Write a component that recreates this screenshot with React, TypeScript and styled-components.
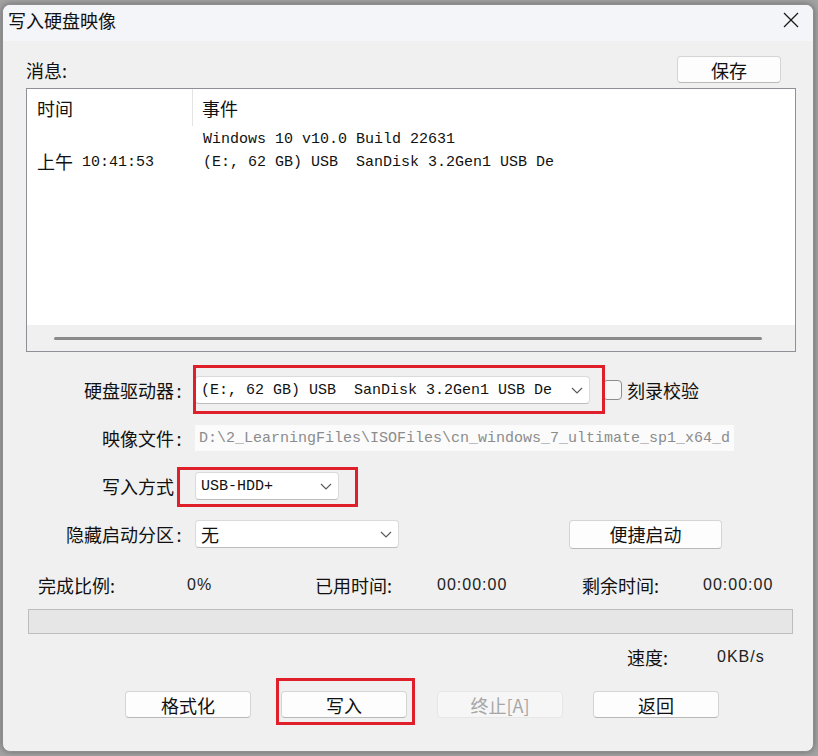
import React from "react";
import styled, { createGlobalStyle } from "styled-components";

const GlobalStyle = createGlobalStyle`
  html, body {
    margin: 0;
    padding: 0;
    background: #a3a3a3;
  }
  body {
    font-family: "Noto Sans CJK SC", "Noto Sans", sans-serif;
    color: #111;
  }
  * {
    box-sizing: border-box;
  }
`;

const Screen = styled.div`
  width: 818px;
  height: 756px;
  padding: 4px 4px 4px 2px;
`;

const Dialog = styled.div`
  width: 812px;
  height: 748px;
  background: #f0f0f0;
  border: 1px solid #8e8e8e;
  border-radius: 8px;
  overflow: hidden;
  display: flex;
  flex-direction: column;
  box-shadow: 0 0 6px rgba(0, 0, 0, 0.35);
`;

const TitleBar = styled.div`
  flex: none;
  height: 36px;
  background: #f4f5f9;
  display: flex;
  align-items: center;
  justify-content: space-between;
  padding: 0 14px 6px 5px;
  font-size: 18px;
`;

const Content = styled.div`
  flex: 1;
  display: flex;
  flex-direction: column;
  padding: 15px 17px 0 23px;
`;

const TopRow = styled.div`
  height: 27px;
  display: flex;
  align-items: center;
  justify-content: space-between;
  font-size: 18px;
`;

const Button = styled.button<{ $w: number; $h?: number }>`
  width: ${(p) => p.$w}px;
  height: ${(p) => p.$h ?? 27}px;
  flex: none;
  padding: 0;
  font-family: "Noto Sans CJK SC", sans-serif;
  font-size: 18px;
  line-height: 1;
  color: #111;
  background: #fdfdfd;
  border: 1px solid #d5d5d5;
  border-bottom-color: #b9b9b9;
  border-radius: 4px;
  display: flex;
  align-items: center;
  justify-content: center;

  &:disabled {
    color: #a6a6a6;
    background: #f6f6f6;
    border-color: #e6e6e6;
  }
`;

const SaveButton = styled(Button)`
  margin-right: 15px;
`;

const ListView = styled.div`
  margin-top: 5px;
  height: 264px;
  background: #fff;
  border: 1px solid #8f9095;
  display: flex;
  flex-direction: column;
`;

const ListHeader = styled.div`
  height: 37px;
  flex: none;
  display: grid;
  grid-template-columns: 166px 1fr;
  font-size: 18px;
`;

const HeaderCell = styled.div<{ $sep?: boolean }>`
  display: flex;
  align-items: center;
  padding-left: ${(p) => (p.$sep ? 10 : 9)}px;
  border-right: ${(p) => (p.$sep ? "1px solid #e4e4e4" : "none")};
`;

const ListBody = styled.div`
  flex: 1;
  padding-top: 2px;
`;

const ListRow = styled.div`
  height: 23px;
  display: grid;
  grid-template-columns: 167px 1fr;
  align-items: center;
  font-family: "Liberation Mono", "Noto Sans CJK SC", monospace;
  font-size: 15px;
  line-height: 23px;
  white-space: pre;
  color: #111;
`;

const TimeCell = styled.div`
  padding-left: 10px;
  display: flex;
  align-items: center;
`;

const EventCell = styled.div`
  padding-left: 9px;
`;

const Wide = styled.span`
  font-family: "Noto Sans CJK SC", sans-serif;
  font-size: 18px;
  line-height: 1;
  margin-bottom: 4px;
`;

const ScrollBand = styled.div`
  height: 26px;
  flex: none;
  background: #f0f0f0;
  display: flex;
  align-items: center;
  padding: 0 33px 0 27px;
`;

const ScrollThumb = styled.div`
  flex: 1;
  height: 3px;
  border-radius: 2px;
  background: #8a8a8a;
`;

const Form = styled.div`
  margin-top: 24px;
  display: flex;
  flex-direction: column;
  gap: 20px;
`;

const FormRow = styled.div`
  height: 28px;
  display: flex;
  align-items: center;
`;

const Label = styled.div`
  width: 158px;
  flex: none;
  margin-right: 11px;
  display: flex;
  justify-content: flex-end;
  font-size: 18px;
  white-space: nowrap;
`;

const Colon = styled.span`
  width: 10px;
  text-align: center;
`;

const Highlight = styled.div<{ $t: number; $r: number; $b: number; $l: number }>`
  position: relative;
  flex: none;

  &::after {
    content: "";
    position: absolute;
    top: -${(p) => p.$t}px;
    right: -${(p) => p.$r}px;
    bottom: -${(p) => p.$b}px;
    left: -${(p) => p.$l}px;
    border: 3px solid #df1f2a;
    pointer-events: none;
  }
`;

const Combo = styled.div<{ $w: number }>`
  width: ${(p) => p.$w}px;
  height: 28px;
  flex: none;
  display: flex;
  align-items: center;
  justify-content: space-between;
  padding: 0 6px 0 5px;
  background: #fff;
  border: 1px solid #dadada;
  border-bottom-color: #bdbdbd;
  border-radius: 4px;
  font-family: "Liberation Mono", "Noto Sans CJK SC", monospace;
  font-size: 15px;
  white-space: pre;
  overflow: hidden;
`;

const ComboCjk = styled.span`
  font-family: "Noto Sans CJK SC", sans-serif;
  font-size: 18px;
`;

const PathField = styled.div`
  width: 539px;
  height: 26px;
  flex: none;
  display: flex;
  align-items: center;
  padding-left: 4px;
  background: #fbfbfb;
  color: #8c8c8c;
  font-family: "Liberation Mono", monospace;
  font-size: 15px;
  white-space: pre;
  overflow: hidden;
`;

const CheckBox = styled.div`
  width: 19px;
  height: 20px;
  flex: none;
  margin-left: 13px;
  border: 1px solid #8d8d8d;
  border-radius: 4px;
  background: #f7f7f7;
`;

const CheckLabel = styled.span`
  margin-left: 5px;
  font-size: 18px;
`;

const QuickButton = styled(Button)`
  margin-left: 170px;
`;

const StatusRow = styled.div`
  margin-top: 24px;
  height: 24px;
  display: grid;
  grid-template-columns: 149px 128px 122px 145px 121px auto;
  align-items: center;
  padding-left: 12px;
`;

const StatusLabel = styled.span`
  font-size: 18px;
`;

const StatusValue = styled.span`
  font-family: "Liberation Sans", sans-serif;
  font-size: 16px;
  letter-spacing: 1px;
  color: #222;
`;

const Progress = styled.div`
  margin: 13px 3px 0 2px;
  height: 25px;
  background: #e6e6e6;
  border: 1px solid #bdbdbd;
`;

const SpeedRow = styled.div`
  margin-top: 11px;
  height: 24px;
  display: flex;
  align-items: center;
  padding-left: 601px;
`;

const SpeedLabel = styled.span`
  width: 90px;
  font-size: 18px;
`;

const ButtonRow = styled.div`
  margin-top: 22px;
  display: flex;
  align-items: center;
  gap: 30px;
  padding-left: 99px;
`;

const Chevron = () => (
  <svg width="12" height="7" viewBox="0 0 12 7">
    <polyline points="1,1 6,6 11,1" fill="none" stroke="#5c5c5c" strokeWidth="1.2" />
  </svg>
);

const CloseIcon = () => (
  <svg width="16" height="16" viewBox="0 0 16 16">
    <line x1="1" y1="1" x2="15" y2="15" stroke="#1a1a1a" strokeWidth="1.2" />
    <line x1="15" y1="1" x2="1" y2="15" stroke="#1a1a1a" strokeWidth="1.2" />
  </svg>
);

const drive = "(E:, 62 GB) USB  SanDisk 3.2Gen1 USB De";

export default function App() {
  return (
    <Screen>
      <GlobalStyle />
      <Dialog>
        <TitleBar>
          <span>写入硬盘映像</span>
          <CloseIcon />
        </TitleBar>
        <Content>
          <TopRow>
            <span>消息:</span>
            <SaveButton $w={104}>保存</SaveButton>
          </TopRow>

          <ListView>
            <ListHeader>
              <HeaderCell $sep>时间</HeaderCell>
              <HeaderCell>事件</HeaderCell>
            </ListHeader>
            <ListBody>
              <ListRow>
                <TimeCell />
                <EventCell>Windows 10 v10.0 Build 22631</EventCell>
              </ListRow>
              <ListRow>
                <TimeCell>
                  <Wide>上午</Wide> 10:41:53
                </TimeCell>
                <EventCell>{drive}</EventCell>
              </ListRow>
            </ListBody>
            <ScrollBand>
              <ScrollThumb />
            </ScrollBand>
          </ListView>

          <Form>
            <FormRow>
              <Label>
                硬盘驱动器<Colon>:</Colon>
              </Label>
              <Highlight $t={11} $r={15} $b={10} $l={2}>
                <Combo $w={395}>
                  <span>{drive}</span>
                  <Chevron />
                </Combo>
              </Highlight>
              <CheckBox />
              <CheckLabel>刻录校验</CheckLabel>
            </FormRow>

            <FormRow>
              <Label>
                映像文件<Colon>:</Colon>
              </Label>
              <PathField>D:\2_LearningFiles\ISOFiles\cn_windows_7_ultimate_sp1_x64_d</PathField>
            </FormRow>

            <FormRow>
              <Label>
                写入方式<Colon />
              </Label>
              <Highlight $t={5} $r={19} $b={7} $l={18}>
                <Combo $w={144}>
                  <span>USB-HDD+</span>
                  <Chevron />
                </Combo>
              </Highlight>
            </FormRow>

            <FormRow>
              <Label>
                隐藏启动分区<Colon>:</Colon>
              </Label>
              <Combo $w={204}>
                <ComboCjk>无</ComboCjk>
                <Chevron />
              </Combo>
              <QuickButton $w={153} $h={29}>
                便捷启动
              </QuickButton>
            </FormRow>
          </Form>

          <StatusRow>
            <StatusLabel>完成比例:</StatusLabel>
            <StatusValue>0%</StatusValue>
            <StatusLabel>已用时间:</StatusLabel>
            <StatusValue>00:00:00</StatusValue>
            <StatusLabel>剩余时间:</StatusLabel>
            <StatusValue>00:00:00</StatusValue>
          </StatusRow>

          <Progress />

          <SpeedRow>
            <SpeedLabel>速度:</SpeedLabel>
            <StatusValue>0KB/s</StatusValue>
          </SpeedRow>

          <ButtonRow>
            <Button $w={126}>格式化</Button>
            <Highlight $t={13} $r={8} $b={7} $l={5}>
              <Button $w={126}>写入</Button>
            </Highlight>
            <Button $w={126} disabled>
              终止[A]
            </Button>
            <Button $w={126}>返回</Button>
          </ButtonRow>
        </Content>
      </Dialog>
    </Screen>
  );
}
